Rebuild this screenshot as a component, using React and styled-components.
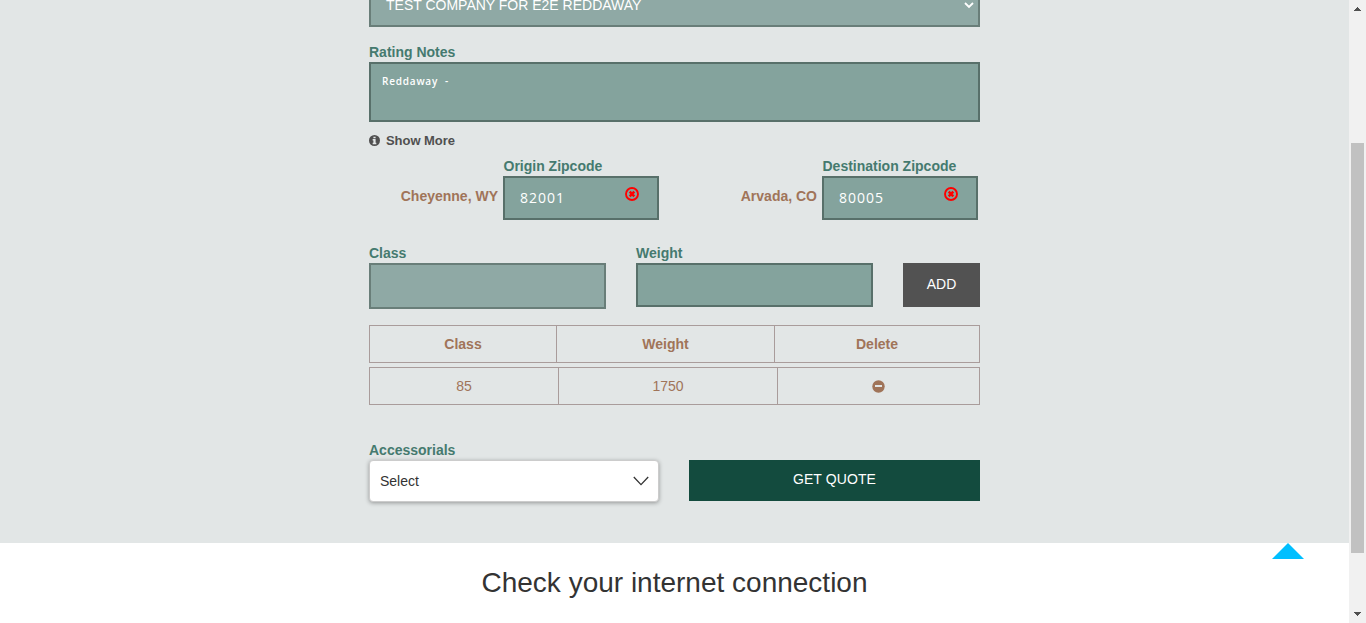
import React from "react";
import styled, { createGlobalStyle } from "styled-components";

const GlobalStyle = createGlobalStyle`
  *, *::before, *::after { box-sizing: border-box; }
  body {
    margin: 0;
    background: #fff;
    color: #333;
    font: 14px/20px "Liberation Sans", Arial, sans-serif;
    overflow: hidden;
  }
`;

const Viewport = styled.div`
  display: flex;
  height: 623px;
  overflow: hidden;
`;

const Page = styled.main`
  flex: 1;
  position: relative;
`;

const QuoteSection = styled.section`
  height: 543px;
  background: #e2e6e6;
  overflow: hidden;
`;

const Form = styled.form`
  width: 611px;
  margin: -19px auto 0;
`;

const Label = styled.label`
  display: block;
  height: 20px;
  font-weight: bold;
  letter-spacing: ${(p) => p.$spacing || "0"};
  color: #457a6f;
  white-space: nowrap;
`;

const Field = styled.div`
  display: flex;
  align-items: flex-start;
  height: ${(p) => p.$height || 44}px;
  border: 2px solid ${(p) => (p.$disabled ? "#697e79" : "#58706a")};
  background: ${(p) => (p.$disabled ? "#8fa9a5" : "#84a39d")};
  color: #fff;
`;

const CompanySelect = styled(Field)`
  justify-content: space-between;
  align-items: center;
  padding: 2px 4px 0 15px;
  margin-bottom: 15px;
`;

const Notes = styled(Field)`
  padding: 7px 11px;
  font-family: "Open Sans", "Noto Sans", sans-serif;
  font-size: 10px;
  font-weight: 600;
  letter-spacing: 0.8px;
  white-space: pre;
`;

const ShowMore = styled.div`
  display: flex;
  align-items: center;
  gap: 6px;
  height: 20px;
  margin: 8px 0 6px;
  font-size: 13px;
  font-weight: bold;
  letter-spacing: -0.05px;
  color: #505050;
`;

const ShowMoreText = styled.span`
  padding-top: 2px;
`;

const ZipRow = styled.div`
  display: flex;
  justify-content: space-between;
  padding-right: 2px;
  height: 64px;
  margin-bottom: 23px;
`;

const ZipGroup = styled.div`
  display: flex;
  justify-content: flex-end;
  gap: 5px;
  width: 290px;
`;

const City = styled.span`
  padding-top: 30px;
  font-weight: bold;
  color: #a07459;
`;

const ZipColumn = styled.div`
  width: 156px;
`;

const ZipLabel = styled(Label)`
  padding-left: 0.5px;
`;

const ZipField = styled(Field)`
  justify-content: space-between;
  padding: 10px 18px 0 15px;
  font-family: "Open Sans", "Noto Sans", sans-serif;
  letter-spacing: 1px;
`;

const ClearGlyph = styled.svg`
  margin-top: -1px;
`;

const ItemRow = styled.div`
  display: flex;
  gap: 30px;
  height: 82px;
`;

const ItemColumn = styled.div`
  width: 237px;
`;

const Button = styled.button`
  flex: 1;
  height: ${(p) => p.$height}px;
  margin-top: 20px;
  padding: 0 0 ${(p) => p.$lift}px;
  border: 0;
  background: ${(p) => p.$color};
  color: #fff;
  font: 14px/20px "Liberation Sans", Arial, sans-serif;
  letter-spacing: ${(p) => p.$spacing};
`;

const TableRow = styled.div`
  display: grid;
  grid-template-columns: ${(p) => p.$columns};
  height: 38px;
  margin-bottom: 4px;
  border: 1px solid #a99c9b;
  color: #a07459;
  font-weight: ${(p) => (p.$head ? "bold" : "normal")};
`;

const Cell = styled.div`
  display: flex;
  align-items: center;
  justify-content: center;
  & + & { border-left: 1px solid #a99c9b; }
`;

const ActionRow = styled.div`
  display: flex;
  gap: 30px;
  margin-top: 35px;
`;

const Accessorials = styled.div`
  width: 290px;
`;

const Dropdown = styled.div`
  display: flex;
  align-items: center;
  justify-content: space-between;
  height: 42px;
  padding: 0 9px 0 10px;
  border: 1px solid #ccc;
  border-radius: 4px;
  background: #fff;
  color: #333;
  box-shadow: 0 1px 4px rgba(0, 0, 0, 0.35);
`;

const Notice = styled.h1`
  margin: 24px 0 0;
  text-align: center;
  font-size: 28px;
  line-height: 31px;
  font-weight: normal;
`;

const BackToTop = styled.svg`
  position: absolute;
  left: 1272px;
  top: 543px;
`;

const Scrollbar = styled.aside`
  display: flex;
  flex-direction: column;
  align-items: center;
  width: 17px;
  background: #f1f1f1;
`;

const ScrollThumb = styled.div`
  width: 13px;
  height: 410px;
  margin: 126px 0 52px;
  background: #c1c1c1;
`;

const ClearIcon = () => (
  <ClearGlyph width="14" height="14" viewBox="0 0 14 14">
    <circle cx="7" cy="7" r="6" fill="none" stroke="#f00" strokeWidth="1.9" />
    <path d="M4.7 4.7l4.6 4.6M9.3 4.7L4.7 9.3" stroke="#f00" strokeWidth="2.5" />
  </ClearGlyph>
);

const ZipInput = ({ city, label, value }) => (
  <ZipGroup>
    <City>{city}</City>
    <ZipColumn>
      <ZipLabel>{label}</ZipLabel>
      <ZipField>
        {value}
        <ClearIcon />
      </ZipField>
    </ZipColumn>
  </ZipGroup>
);

const ScrollArrow = ({ down }) => (
  <svg width="17" height="17" viewBox="0 0 17 17" shapeRendering="crispEdges">
    <path d={down ? "M5 7h7v1h-1v1h-1v1H9v1H8v-1H7V9H6V8H5z" : "M5 11h7v-1h-1V9h-1V8H9V7H8v1H7v1H6v1H5z"} fill="#505050" />
  </svg>
);

export default function App() {
  return (
    <>
      <GlobalStyle />
      <Viewport>
        <Page>
          <QuoteSection>
            <Form>
              <CompanySelect $height={46} $disabled>
                TEST COMPANY FOR E2E REDDAWAY
                <svg width="10" height="8" viewBox="0 0 10 8">
                  <path d="M1 2l4 4 4-4" fill="none" stroke="#fff" strokeWidth="1.8" />
                </svg>
              </CompanySelect>
              <Label>Rating Notes</Label>
              <Notes $height={60}>{"Reddaway  -"}</Notes>
              <ShowMore>
                <svg width="11" height="11" viewBox="0 0 12 12">
                  <circle cx="6" cy="6" r="6" fill="#505050" />
                  <path d="M4.8 1.8h2.4v1.8H4.8zM4 4.4h3.2v4.1H8V10H4V8.5h.8V6H4z" fill="#e2e6e6" />
                </svg>
                <ShowMoreText>Show More</ShowMoreText>
              </ShowMore>
              <ZipRow>
                <ZipInput city="Cheyenne, WY" label="Origin Zipcode" value="82001" />
                <ZipInput city="Arvada, CO" label="Destination Zipcode" value="80005" />
              </ZipRow>
              <ItemRow>
                <ItemColumn>
                  <Label>Class</Label>
                  <Field $height={46} $disabled />
                </ItemColumn>
                <ItemColumn>
                  <Label>Weight</Label>
                  <Field />
                </ItemColumn>
                <Button type="button" $height={44} $lift={2} $color="#525252" $spacing="0">ADD</Button>
              </ItemRow>
              <TableRow $head $columns="186px 218px 1fr">
                <Cell>Class</Cell>
                <Cell>Weight</Cell>
                <Cell>Delete</Cell>
              </TableRow>
              <TableRow $columns="188px 219px 1fr">
                <Cell>85</Cell>
                <Cell>1750</Cell>
                <Cell>
                  <svg width="13" height="13" viewBox="0 0 13 13">
                    <circle cx="6.5" cy="6.5" r="6.2" fill="#a07459" />
                    <path d="M3 5h7v2H3z" fill="#e2e6e6" />
                  </svg>
                </Cell>
              </TableRow>
              <ActionRow>
                <Accessorials>
                  <Label>Accessorials</Label>
                  <Dropdown>
                    Select
                    <svg width="16" height="10" viewBox="0 0 16 10">
                      <path d="M.8 1L8 8.6 15.2 1" fill="none" stroke="#333" strokeWidth="1.3" />
                    </svg>
                  </Dropdown>
                </Accessorials>
                <Button type="button" $height={41} $lift={3} $color="#134b3e" $spacing="0.1px">GET QUOTE</Button>
              </ActionRow>
            </Form>
          </QuoteSection>
          <Notice>Check your internet connection</Notice>
          <BackToTop width="32" height="16" viewBox="0 0 32 16">
            <path d="M16 0l16 16H0z" fill="#00bfff" />
          </BackToTop>
        </Page>
        <Scrollbar>
          <ScrollArrow />
          <ScrollThumb />
          <ScrollArrow down />
        </Scrollbar>
      </Viewport>
    </>
  );
}
